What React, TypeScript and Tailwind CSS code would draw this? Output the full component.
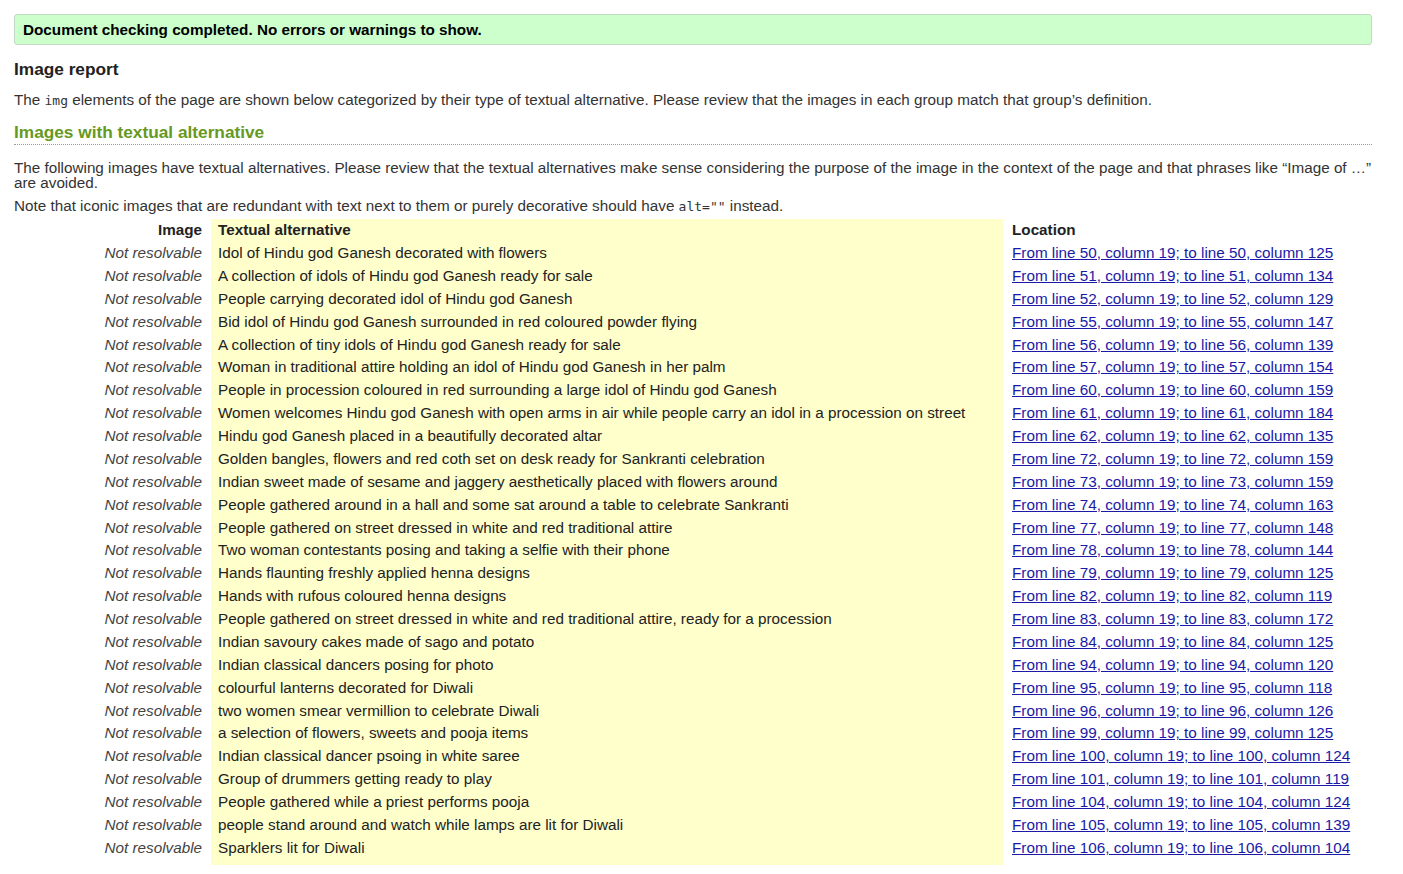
const rows: [string, string][] = [
  ["Idol of Hindu god Ganesh decorated with flowers", "From line 50, column 19; to line 50, column 125"],
  ["A collection of idols of Hindu god Ganesh ready for sale", "From line 51, column 19; to line 51, column 134"],
  ["People carrying decorated idol of Hindu god Ganesh", "From line 52, column 19; to line 52, column 129"],
  ["Bid idol of Hindu god Ganesh surrounded in red coloured powder flying", "From line 55, column 19; to line 55, column 147"],
  ["A collection of tiny idols of Hindu god Ganesh ready for sale", "From line 56, column 19; to line 56, column 139"],
  ["Woman in traditional attire holding an idol of Hindu god Ganesh in her palm", "From line 57, column 19; to line 57, column 154"],
  ["People in procession coloured in red surrounding a large idol of Hindu god Ganesh", "From line 60, column 19; to line 60, column 159"],
  ["Women welcomes Hindu god Ganesh with open arms in air while people carry an idol in a procession on street", "From line 61, column 19; to line 61, column 184"],
  ["Hindu god Ganesh placed in a beautifully decorated altar", "From line 62, column 19; to line 62, column 135"],
  ["Golden bangles, flowers and red coth set on desk ready for Sankranti celebration", "From line 72, column 19; to line 72, column 159"],
  ["Indian sweet made of sesame and jaggery aesthetically placed with flowers around", "From line 73, column 19; to line 73, column 159"],
  ["People gathered around in a hall and some sat around a table to celebrate Sankranti", "From line 74, column 19; to line 74, column 163"],
  ["People gathered on street dressed in white and red traditional attire", "From line 77, column 19; to line 77, column 148"],
  ["Two woman contestants posing and taking a selfie with their phone", "From line 78, column 19; to line 78, column 144"],
  ["Hands flaunting freshly applied henna designs", "From line 79, column 19; to line 79, column 125"],
  ["Hands with rufous coloured henna designs", "From line 82, column 19; to line 82, column 119"],
  ["People gathered on street dressed in white and red traditional attire, ready for a procession", "From line 83, column 19; to line 83, column 172"],
  ["Indian savoury cakes made of sago and potato", "From line 84, column 19; to line 84, column 125"],
  ["Indian classical dancers posing for photo", "From line 94, column 19; to line 94, column 120"],
  ["colourful lanterns decorated for Diwali", "From line 95, column 19; to line 95, column 118"],
  ["two women smear vermillion to celebrate Diwali", "From line 96, column 19; to line 96, column 126"],
  ["a selection of flowers, sweets and pooja items", "From line 99, column 19; to line 99, column 125"],
  ["Indian classical dancer psoing in white saree", "From line 100, column 19; to line 100, column 124"],
  ["Group of drummers getting ready to play", "From line 101, column 19; to line 101, column 119"],
  ["People gathered while a priest performs pooja", "From line 104, column 19; to line 104, column 124"],
  ["people stand around and watch while lamps are lit for Diwali", "From line 105, column 19; to line 105, column 139"],
  ["Sparklers lit for Diwali", "From line 106, column 19; to line 106, column 104"],
];

export default function App() {
  return (
    <div className="min-h-[874px] bg-white pl-[14px] pt-[14px] font-['Liberation_Sans',Arial,sans-serif] text-[15.25px] text-[#333]">
      <div className="w-[1358px]">
        {/* status banner */}
        <div className="h-[31px] rounded-[3px] border border-[#c4d9c4] bg-[#ccffcc] pl-[8px] text-[15.25px] font-bold leading-[29px] text-black">
          Document checking completed. No errors or warnings to show.
        </div>

        <h2 className="mt-[14px] text-[17.25px] font-bold leading-[20px] text-[#222]">Image report</h2>
        <p className="mt-[12px] leading-[18px]">
          The <code className="font-['DejaVu_Sans_Mono',monospace] text-[13px]">img</code> elements of the page are shown below
          categorized by their type of textual alternative. Please review that the images in each group match that group’s
          definition.
        </p>

        <h3 className="mt-[12px] border-b border-dotted border-[#9a9a9a] pb-[2px] text-[17.25px] font-bold leading-[20px] text-[#669922]">
          Images with textual alternative
        </h3>

        <p className="mt-[15px] w-[1366px] leading-[15px]">
          The following images have textual alternatives. Please review that the textual alternatives make sense considering the
          purpose of the image in the context of the page and that phrases like “Image of …” are avoided.
        </p>
        <p className="mt-[7px] leading-[18px]">
          Note that iconic images that are redundant with text next to them or purely decorative should have{" "}
          <code className="font-['DejaVu_Sans_Mono',monospace] text-[13px]">alt=""</code> instead.
        </p>

        <table className="mt-[3px] border-collapse">
          <thead>
            <tr className="h-[23px]">
              <th className="w-[197px] pr-[9px] text-right font-bold text-[#222]">Image</th>
              <th className="w-[792px] bg-[#ffffcc] pl-[7px] text-left font-bold text-[#222]">Textual alternative</th>
              <th className="pl-[9px] text-left font-bold text-[#222]">Location</th>
            </tr>
          </thead>
          <tbody>
            {rows.map(([alt, loc], i) => (
              <tr key={i} className="h-[22.78px]">
                <td className="pr-[9px] text-right italic text-[#444]">Not resolvable</td>
                <td className="bg-[#ffffcc] pl-[7px] text-[#222]">{alt}</td>
                <td className="pl-[9px]">
                  <a href="#" className="text-[#1a1aa6] underline">
                    {loc}
                  </a>
                </td>
              </tr>
            ))}
            <tr className="h-[5px]">
              <td />
              <td className="bg-[#ffffcc]" />
              <td />
            </tr>
          </tbody>
        </table>
      </div>
    </div>
  );
}
